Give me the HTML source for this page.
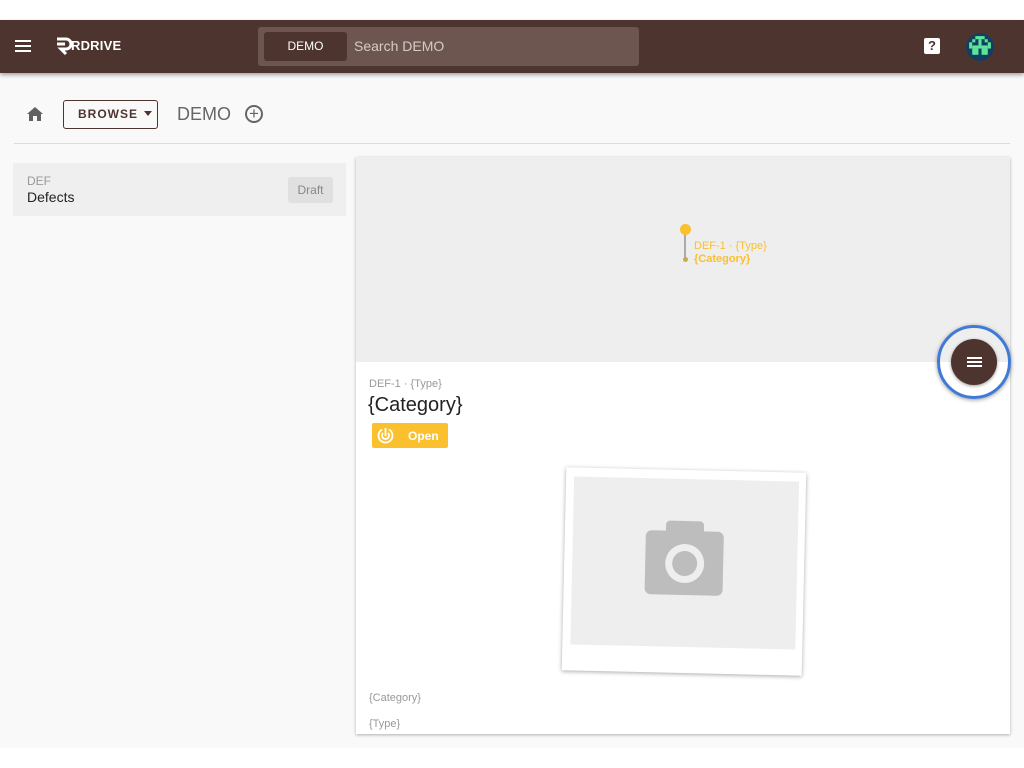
<!DOCTYPE html>
<html><head><meta charset="utf-8"><style>
*{box-sizing:border-box;margin:0;padding:0}
body{width:1024px;height:768px;background:#fff;font-family:"Liberation Sans",Roboto,sans-serif;position:relative;overflow:hidden}
.pg{position:absolute;top:20px;left:0;width:1024px;height:728px;background:#f9f9f9}
.hd{position:absolute;top:20px;left:0;width:1024px;height:53px;background:#4e342e;box-shadow:0 2px 4px rgba(0,0,0,.35)}
.a{position:absolute}
</style></head><body>
<div class="pg"></div>
<div class="hd">
 <div class="a" style="left:15px;top:20px;width:16px;height:2px;background:#fff;box-shadow:0 5px 0 #fff,0 10px 0 #fff"></div>
 <svg class="a" style="left:55px;top:17px" width="18" height="18" viewBox="0 0 18 18"><path d="M2 2h9a5 5 0 0 1 0 10H6l5 5" stroke="#fff" stroke-width="3" fill="none"/><path d="M2 7h8" stroke="#fff" stroke-width="3"/></svg>
 <div class="a" style="left:71px;top:18px;color:#fff;font-size:13px;font-weight:bold;letter-spacing:.2px">RDRIVE</div>
 <div class="a" style="left:258px;top:7px;width:381px;height:39px;background:#6d5650;border-radius:3px"></div>
 <div class="a" style="left:264px;top:12px;width:83px;height:29px;background:#4e342e;border-radius:3px;color:#fff;font-size:12px;text-align:center;line-height:29px">DEMO</div>
 <div class="a" style="left:354px;top:18px;color:#d7cbc8;font-size:14px">Search DEMO</div>
 <div class="a" style="left:924px;top:18px;width:16px;height:16px;background:#fff;border-radius:2px;color:#4e342e;font-size:13px;font-weight:bold;text-align:center;line-height:16px">?</div>
 <div class="a" style="left:966px;top:13px;width:28px;height:28px;border-radius:50%;background:#123f60;overflow:hidden">
  <svg width="28" height="28" viewBox="0 0 9 9"><g fill="#5de49a"><rect x="3" y="1" width="3" height="1"/><rect x="2" y="2" width="1" height="1"/><rect x="6" y="2" width="1" height="1"/><rect x="4" y="2" width="1" height="2"/><rect x="2" y="4" width="5" height="1"/><rect x="2" y="5" width="2" height="2"/><rect x="5" y="5" width="2" height="2"/><rect x="1" y="3" width="1" height="2"/><rect x="7" y="3" width="1" height="2"/></g></svg>
 </div>
</div>
<svg class="a" style="left:26px;top:106px" width="18" height="16" viewBox="0 0 18 16"><path d="M9 1L1 8h2v7h4v-5h4v5h4V8h2z" fill="#616161"/></svg>
<div class="a" style="left:63px;top:100px;width:95px;height:29px;border:1px solid #4e342e;border-radius:3px;font-size:12px;font-weight:bold;letter-spacing:1px;color:#4e342e;line-height:27px;padding-left:14px">BROWSE <span style="display:inline-block;border:4px solid transparent;border-top:5px solid #4e342e;vertical-align:-2px;margin-left:2px"></span></div>
<div class="a" style="left:177px;top:104px;font-size:18px;color:#666">DEMO</div>
<div class="a" style="left:245px;top:105px;width:18px;height:18px;border:2px solid #666;border-radius:50%;color:#666;font-size:17px;line-height:13px;text-align:center">+</div>
<div class="a" style="left:14px;top:143px;width:996px;height:1px;background:#ddd"></div>
<div class="a" style="left:13px;top:163px;width:333px;height:53px;background:#efefef"></div>
<div class="a" style="left:27px;top:174px;font-size:12px;color:#999">DEF</div>
<div class="a" style="left:27px;top:189px;font-size:14px;color:#222">Defects</div>
<div class="a" style="left:288px;top:177px;width:45px;height:26px;background:#e0e0e0;border-radius:3px;color:#888;font-size:12px;text-align:center;line-height:26px">Draft</div>
<div class="a" style="left:356px;top:157px;width:654px;height:577px;background:#fff;box-shadow:0 1px 3px rgba(0,0,0,.3)"></div>
<div class="a" style="left:356px;top:157px;width:654px;height:205px;background:#eee"></div>
<div class="a" style="left:684px;top:230px;width:2px;height:30px;background:#aaa"></div>
<div class="a" style="left:680px;top:224px;width:11px;height:11px;border-radius:50%;background:#fbc02d"></div>
<div class="a" style="left:683px;top:257px;width:5px;height:5px;border-radius:50%;background:#c9a94a"></div>
<div class="a" style="left:694px;top:240px;font-size:11px;color:#fbc02d;line-height:13px">DEF-1 · {Type}<br><b>{Category}</b></div>
<div class="a" style="left:937px;top:325px;width:74px;height:74px;border-radius:50%;border:3px solid #3f7bd6;box-shadow:0 1px 4px rgba(0,0,0,.4)"></div>
<div class="a" style="left:951px;top:339px;width:46px;height:46px;border-radius:50%;background:#4e342e;box-shadow:0 1px 3px rgba(0,0,0,.4)"></div>
<div class="a" style="left:967px;top:357px;width:15px;height:2px;background:#fff;box-shadow:0 4px 0 #fff,0 8px 0 #fff"></div>
<div class="a" style="left:369px;top:378px;font-size:11px;color:#999">DEF-1 · {Type}</div>
<div class="a" style="left:368px;top:394px;font-size:20px;color:#222">{Category}</div>
<div class="a" style="left:372px;top:423px;width:76px;height:25px;background:#fbc02d;border-radius:2px"></div>
<svg class="a" style="left:377px;top:427px" width="17" height="17" viewBox="0 0 17 17"><g fill="none" stroke="#fff" stroke-width="1.8"><path d="M5 2.5A7 7 0 1 0 12 2.5"/><path d="M6 6A3.5 3.5 0 1 0 11 6"/><path d="M8.5 1v8"/></g></svg>
<div class="a" style="left:408px;top:429px;font-size:12px;font-weight:bold;color:#fff">Open</div>
<div class="a" style="left:564px;top:470px;width:240px;height:203px;background:#fff;transform:rotate(1.3deg);box-shadow:0 1px 4px rgba(0,0,0,.35)">
 <div class="a" style="left:8px;top:9px;width:225px;height:168px;background:#eee"></div>
 <div class="a" style="left:81px;top:61px;width:78px;height:64px;background:#bdbdbd;border-radius:6px"></div>
 <div class="a" style="left:101px;top:51px;width:38px;height:14px;background:#bdbdbd;border-radius:4px 4px 0 0"></div>
 <div class="a" style="left:101px;top:74px;width:39px;height:39px;border-radius:50%;background:#eee"></div>
 <div class="a" style="left:108px;top:81px;width:25px;height:25px;border-radius:50%;background:#bdbdbd"></div>
</div>
<div class="a" style="left:369px;top:692px;font-size:11px;color:#999">{Category}</div>
<div class="a" style="left:369px;top:718px;font-size:11px;color:#999">{Type}</div>
</body></html>
